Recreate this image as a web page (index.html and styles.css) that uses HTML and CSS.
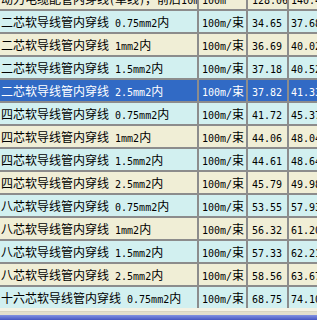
FILE: index.html
```html
<!DOCTYPE html>
<html lang="zh-CN">
<head>
<meta charset="utf-8">
<title>穿线价格表</title>
<link rel="stylesheet" href="styles.css">
</head>
<body>
<div class="viewport">
  <div class="grid">
    <div class="c n b">动力电缆配管内穿线<span class="m">(</span>单线<span class="m">)</span>，前后<span class="m">10mm</span></div>
    <div class="c u b"><span class="m">100m</span></div>
    <div class="c p b"><span class="m">128.06</span></div>
    <div class="c q b"><span class="m">140.49</span></div>

    <div class="c n a">二芯软导线管内穿线<span class="m"> 0.75mm2</span>内</div>
    <div class="c u a"><span class="m">100m/</span>束</div>
    <div class="c p a"><span class="m">34.65</span></div>
    <div class="c q a"><span class="m">37.68</span></div>

    <div class="c n b">二芯软导线管内穿线<span class="m"> 1mm2</span>内</div>
    <div class="c u b"><span class="m">100m/</span>束</div>
    <div class="c p b"><span class="m">36.69</span></div>
    <div class="c q b"><span class="m">40.02</span></div>

    <div class="c n a">二芯软导线管内穿线<span class="m"> 1.5mm2</span>内</div>
    <div class="c u a"><span class="m">100m/</span>束</div>
    <div class="c p a"><span class="m">37.18</span></div>
    <div class="c q a"><span class="m">40.52</span></div>

    <div class="c n s">二芯软导线管内穿线<span class="m"> 2.5mm2</span>内</div>
    <div class="c u s"><span class="m">100m/</span>束</div>
    <div class="c p s"><span class="m">37.82</span></div>
    <div class="c q s"><span class="m">41.33</span></div>

    <div class="c n a">四芯软导线管内穿线<span class="m"> 0.75mm2</span>内</div>
    <div class="c u a"><span class="m">100m/</span>束</div>
    <div class="c p a"><span class="m">41.72</span></div>
    <div class="c q a"><span class="m">45.37</span></div>

    <div class="c n b">四芯软导线管内穿线<span class="m"> 1mm2</span>内</div>
    <div class="c u b"><span class="m">100m/</span>束</div>
    <div class="c p b"><span class="m">44.06</span></div>
    <div class="c q b"><span class="m">48.04</span></div>

    <div class="c n a">四芯软导线管内穿线<span class="m"> 1.5mm2</span>内</div>
    <div class="c u a"><span class="m">100m/</span>束</div>
    <div class="c p a"><span class="m">44.61</span></div>
    <div class="c q a"><span class="m">48.64</span></div>

    <div class="c n b">四芯软导线管内穿线<span class="m"> 2.5mm2</span>内</div>
    <div class="c u b"><span class="m">100m/</span>束</div>
    <div class="c p b"><span class="m">45.79</span></div>
    <div class="c q b"><span class="m">49.98</span></div>

    <div class="c n a">八芯软导线管内穿线<span class="m"> 0.75mm2</span>内</div>
    <div class="c u a"><span class="m">100m/</span>束</div>
    <div class="c p a"><span class="m">53.55</span></div>
    <div class="c q a"><span class="m">57.93</span></div>

    <div class="c n b">八芯软导线管内穿线<span class="m"> 1mm2</span>内</div>
    <div class="c u b"><span class="m">100m/</span>束</div>
    <div class="c p b"><span class="m">56.32</span></div>
    <div class="c q b"><span class="m">61.20</span></div>

    <div class="c n a">八芯软导线管内穿线<span class="m"> 1.5mm2</span>内</div>
    <div class="c u a"><span class="m">100m/</span>束</div>
    <div class="c p a"><span class="m">57.33</span></div>
    <div class="c q a"><span class="m">62.21</span></div>

    <div class="c n b">八芯软导线管内穿线<span class="m"> 2.5mm2</span>内</div>
    <div class="c u b"><span class="m">100m/</span>束</div>
    <div class="c p b"><span class="m">58.56</span></div>
    <div class="c q b"><span class="m">63.67</span></div>

    <div class="c n a">十六芯软导线管内穿线<span class="m"> 0.75mm2</span>内</div>
    <div class="c u a"><span class="m">100m/</span>束</div>
    <div class="c p a"><span class="m">68.75</span></div>
    <div class="c q a"><span class="m">74.10</span></div>
  </div>
</div>
<div class="frame">
  <div class="f1"></div>
  <div class="f2"></div>
  <div class="f3"></div>
  <div class="f4"></div>
</div>
</body>
</html>
```
FILE: styles.css
```css
html, body {
  margin: 0;
  padding: 0;
  background: #ffffff;
}
body {
  width: 317px;
  height: 328px;
  overflow: hidden;
  font-family: "Noto Sans CJK SC", "Noto Sans", sans-serif;
  font-size: 12px;
  color: #000000;
}
.viewport {
  width: 317px;
  height: 308px;
  overflow: hidden;
}
.grid {
  display: grid;
  grid-template-columns: 197px 47px 39px 60px;
  grid-auto-rows: 21px;
  gap: 2px;
  background: #8c8c8c;
  width: 349px;
  margin-top: -12px;
}
.c {
  height: 21px;
  line-height: 21px;
  white-space: nowrap;
  overflow: hidden;
}
.m {
  font-family: "DejaVu Sans Mono", "Liberation Mono", monospace;
  font-size: 10px;
  white-space: pre;
}
.n { padding-left: 1px; }
.u { padding-left: 3px; }
.p { padding-left: 4px; }
.q { padding-left: 2px; }
.a { background: #d2f0f0; }
.b { background: #f0eed6; }
.s { background: #316ac5; color: #ffffff; }
.frame {
  display: flex;
  flex-direction: column;
}
.f1 { height: 3px; background: #f4f2e4; }
.f2 { height: 1px; background: #d8d4c1; }
.f3 { height: 3px; background: #e3dfcd; }
.f4 { height: 5px; background: linear-gradient(#8292e2, #4656c2); }
```
